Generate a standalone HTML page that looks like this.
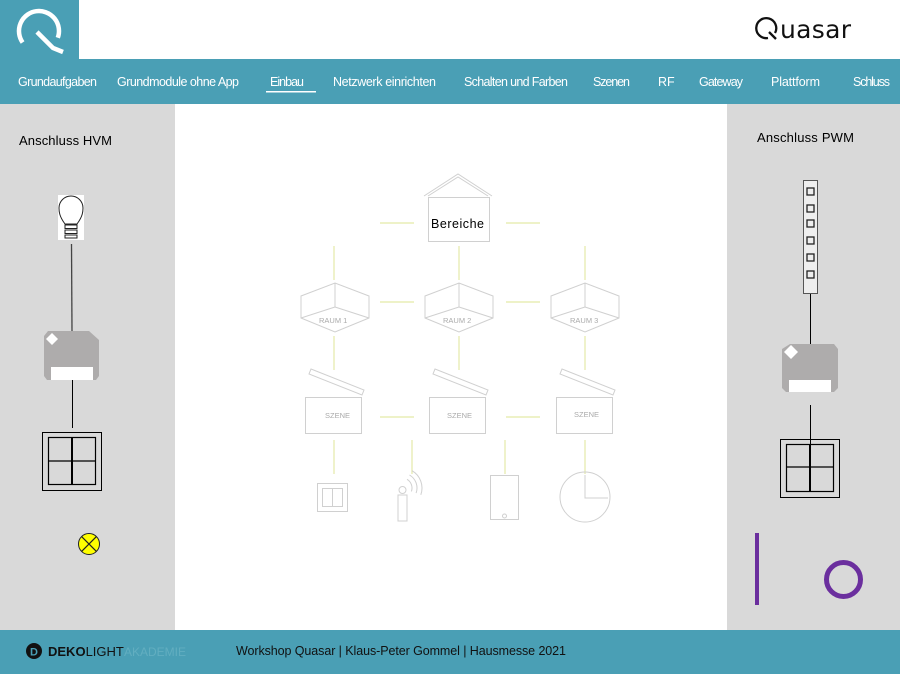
<!DOCTYPE html>
<html><head><meta charset="utf-8"><style>
html,body{margin:0;padding:0;width:900px;height:674px;overflow:hidden;background:#fff;font-family:"Liberation Sans",sans-serif}
svg{display:block}
</style></head><body>
<svg width="900" height="674" viewBox="0 0 900 674" xmlns="http://www.w3.org/2000/svg">
<rect x="0" y="0" width="900" height="674" fill="#fff"/>
<rect x="0" y="0" width="79" height="60" fill="#4a9fb5"/>
<rect x="0" y="59" width="900" height="45" fill="#4a9fb5"/>
<g fill="none" stroke="#fff" stroke-width="4.5">
<path d="M57.8 37.8 A20 20 0 1 0 22.6 42.5"/>
<path d="M37 32 L53 48 L63 52"/>
</g>
<g fill="none" stroke="#111" stroke-width="2.3">
<path d="M775 33 A10 10 0 1 0 768 38"/>
<path d="M769 32 L776 39"/>
</g>
<text x="780" y="38" font-size="25" fill="#111" font-family="DejaVu Sans,sans-serif" letter-spacing="0.3">uasar</text>
<g font-size="12.5" fill="#fff" font-family="Liberation Sans,sans-serif">
<text x="18" y="86" textLength="79">Grundaufgaben</text>
<text x="117" y="86" textLength="122">Grundmodule ohne App</text>
<text x="270" y="86" textLength="34">Einbau</text>
<text x="333" y="86" textLength="103">Netzwerk einrichten</text>
<text x="464" y="86" textLength="104">Schalten und Farben</text>
<text x="593" y="86" textLength="37">Szenen</text>
<text x="658" y="86">RF</text>
<text x="699" y="86" textLength="44">Gateway</text>
<text x="771" y="86" textLength="49">Plattform</text>
<text x="853" y="86" textLength="37">Schluss</text>
</g>
<rect x="266" y="91" width="50" height="1.5" fill="#fff"/>
<rect x="0" y="104" width="175" height="526" fill="#d9d9d9"/>
<rect x="727" y="104" width="173" height="526" fill="#d9d9d9"/>
<text x="19" y="145" font-size="13" fill="#000" font-family="Liberation Sans,sans-serif" textLength="93">Anschluss HVM</text>
<text x="757" y="142" font-size="13" fill="#000" font-family="Liberation Sans,sans-serif" textLength="97">Anschluss PWM</text>
<rect x="58" y="195" width="26" height="45" fill="#fff"/>
<path d="M65 224 C59 216 59 211 59 208 A12 12 0 0 1 83 208 C83 211 83 216 77 224 Z" fill="#fff" stroke="#222" stroke-width="1"/>
<rect x="65" y="225" width="12" height="3.5" fill="#fff" stroke="#222"/>
<rect x="65" y="230" width="12" height="3.5" fill="#fff" stroke="#222"/>
<rect x="65" y="235" width="12" height="3" fill="#fff" stroke="#222"/>
<line x1="71.5" y1="244" x2="72" y2="331" stroke="#444" stroke-width="1.3"/>
<path d="M48 331 H89 L99 340 V376 L96 380 H47 L44 376 V336 Z" fill="#aeacac"/>
<path d="M46 339 L52 333 L58 339 L52 345 Z" fill="#fff"/>
<rect x="51" y="367" width="42" height="13" fill="#fff"/>
<line x1="72.5" y1="380" x2="72.5" y2="428" stroke="#000" stroke-width="1"/>
<rect x="42.5" y="432.5" width="59" height="58" fill="none" stroke="#000" stroke-width="1"/>
<rect x="48.5" y="437.5" width="47" height="47" fill="none" stroke="#000" stroke-width="1.2"/>
<line x1="48" y1="461" x2="96" y2="461" stroke="#000" stroke-width="1.2"/>
<line x1="72" y1="437" x2="72" y2="485" stroke="#000" stroke-width="2"/>
<circle cx="89" cy="544" r="10.5" fill="#ffff00" stroke="#222" stroke-width="1"/>
<path d="M81.6 536.6 L96.4 551.4 M96.4 536.6 L81.6 551.4" stroke="#222" stroke-width="1.2"/>
<rect x="803.5" y="180.5" width="14" height="113" fill="#eee" stroke="#555" stroke-width="1"/>
<g fill="none" stroke="#222" stroke-width="1.3">
<rect x="807" y="188" width="7" height="7"/><rect x="807" y="205" width="7" height="7"/>
<rect x="807" y="220" width="7" height="7"/><rect x="807" y="237" width="7" height="7"/>
<rect x="807" y="254" width="7" height="7"/><rect x="807" y="271" width="7" height="7"/>
</g>
<line x1="810.5" y1="294" x2="810.5" y2="344" stroke="#000" stroke-width="1"/>
<path d="M790 344 H834 L838 349 V388 L834 392 H786 L782 388 V349 Z" fill="#aeacac"/>
<path d="M784 352 L791 345 L798 352 L791 359 Z" fill="#fff"/>
<rect x="789" y="380" width="42" height="12" fill="#fff"/>
<line x1="810.5" y1="405" x2="810.5" y2="475" stroke="#000" stroke-width="1"/>
<rect x="780.5" y="439.5" width="59" height="58" fill="none" stroke="#000" stroke-width="1"/>
<rect x="786.5" y="444.5" width="47" height="47" fill="none" stroke="#000" stroke-width="1.2"/>
<line x1="786" y1="467" x2="834" y2="467" stroke="#000" stroke-width="1.2"/>
<line x1="810" y1="444" x2="810" y2="492" stroke="#000" stroke-width="2"/>
<rect x="755" y="533" width="4" height="72" fill="#6b2f9e"/>
<circle cx="843.5" cy="579.5" r="17" fill="none" stroke="#6b2f9e" stroke-width="5"/>
<g stroke="#e4e9a8" stroke-width="1.2">
<line x1="380" y1="223" x2="414" y2="223"/><line x1="506" y1="223" x2="540" y2="223"/>
<line x1="334" y1="246" x2="334" y2="280"/><line x1="459" y1="246" x2="459" y2="280"/><line x1="585" y1="246" x2="585" y2="280"/>
<line x1="380" y1="302" x2="414" y2="302"/><line x1="506" y1="302" x2="540" y2="302"/>
<line x1="334" y1="336" x2="334" y2="370"/><line x1="459" y1="336" x2="459" y2="370"/><line x1="585" y1="336" x2="585" y2="370"/>
<line x1="380" y1="417" x2="414" y2="417"/><line x1="506" y1="417" x2="540" y2="417"/>
<line x1="334" y1="440" x2="334" y2="474"/><line x1="412" y1="440" x2="412" y2="474"/><line x1="505" y1="440" x2="505" y2="474"/><line x1="585" y1="440" x2="585" y2="474"/>
</g>
<g fill="none" stroke="#d0d0d0" stroke-width="1">
<path d="M424 196 L458 174 L492 196 M428 196 L458 177 L488 196"/>
<rect x="428.5" y="197.5" width="61" height="44"/>
<path d="M301 296 L335 283 L369 296 V318 L335 332 L301 318 Z M335 283 V307 L301 318 M335 307 L369 318"/>
<path d="M425 296 L459 283 L493 296 V318 L459 332 L425 318 Z M459 283 V307 L425 318 M459 307 L493 318"/>
<path d="M551 296 L585 283 L619 296 V318 L585 332 L551 318 Z M585 283 V307 L551 318 M585 307 L619 318"/>
<path d="M311 369 L364 390 L362 395 L309 374 Z"/><rect x="305.5" y="397.5" width="56" height="36"/>
<path d="M435 369 L488 390 L486 395 L433 374 Z"/><rect x="429.5" y="397.5" width="56" height="36"/>
<path d="M562 369 L615 390 L613 395 L560 374 Z"/><rect x="556.5" y="397.5" width="56" height="36"/>
<rect x="317.5" y="483.5" width="30" height="28"/><rect x="322.5" y="488.5" width="20" height="18"/><line x1="332.5" y1="488" x2="332.5" y2="507"/>
<circle cx="402.5" cy="490" r="3.5"/><path d="M398 495 H407 V521 H398 Z"/>
<path d="M407 479.3 A10 10 0 0 1 411.4 491.4 M409.5 475 A15 15 0 0 1 416.1 493.1 M412 470.7 A20 20 0 0 1 420.8 494.8"/>
<rect x="490.5" y="475.5" width="28" height="44"/><circle cx="504.5" cy="516" r="2"/>
<circle cx="585" cy="497" r="25"/><path d="M585 475 V498 H608"/>
</g>
<text x="431" y="228" font-size="12.5" fill="#000" font-family="Liberation Sans,sans-serif" textLength="53">Bereiche</text>
<g font-size="7.5" fill="#aaa" font-family="Liberation Sans,sans-serif">
<text x="319" y="323">RAUM 1</text><text x="443" y="323">RAUM 2</text><text x="570" y="323">RAUM 3</text>
<text x="325" y="418">SZENE</text><text x="447" y="418">SZENE</text><text x="574" y="417">SZENE</text>
</g>
<rect x="0" y="630" width="900" height="44" fill="#4a9fb5"/>
<circle cx="34" cy="651" r="8" fill="#111"/>
<text x="30" y="655.5" font-size="11" font-weight="bold" fill="#4a9fb5">D</text>
<text x="48" y="656" font-size="13" fill="#111"><tspan font-weight="bold">DEKO</tspan>LIGHT</text>
<text x="124" y="656" font-size="12" fill="#62aec0">AKADEMIE</text>
<text x="236" y="655" font-size="12.5" fill="#111" textLength="330">Workshop Quasar | Klaus-Peter Gommel | Hausmesse 2021</text>
</svg>
</body></html>
